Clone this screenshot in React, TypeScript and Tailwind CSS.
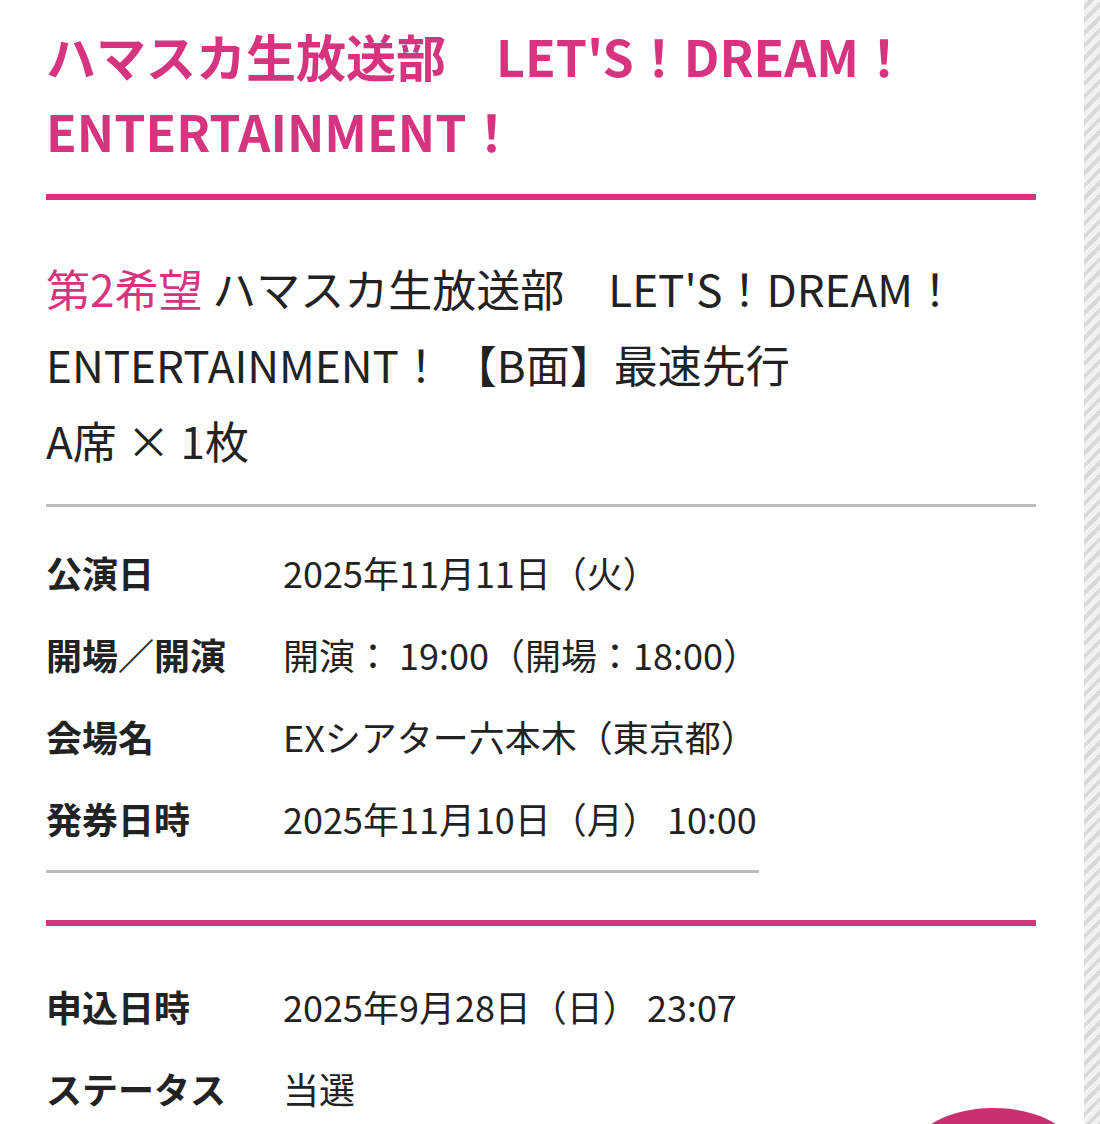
const rows1 = [
  { label: '公演日', value: '2025年11月11日（火）' },
  { label: '開場／開演', value: '開演： 19:00（開場：18:00）' },
  { label: '会場名', value: 'EXシアター六本木（東京都）' },
  { label: '発券日時', value: '2025年11月10日（月） 10:00' },
];

const rows2 = [
  { label: '申込日時', value: '2025年9月28日（日） 23:07' },
  { label: 'ステータス', value: '当選' },
];

function InfoTable({ rows }: { rows: { label: string; value: string }[] }) {
  return (
    <div className="grid grid-cols-[237px_auto] w-fit">
      {rows.map((r) => (
        <div key={r.label} className="contents">
          <div className="py-[15px] text-[36px] leading-[52px] font-semibold">{r.label}</div>
          <div className="py-[15px] text-[36px] leading-[52px] whitespace-nowrap">{r.value}</div>
        </div>
      ))}
    </div>
  );
}

export default function App() {
  return (
    <div
      className="min-h-[1124px] flex bg-[repeating-linear-gradient(135deg,#f2f2f2_0px,#f2f2f2_5px,#d9d9d9_5px,#d9d9d9_9px)] text-[#222]"
      style={{ fontFamily: '"Noto Sans CJK JP", "Noto Sans", sans-serif' }}
    >
      <div className="w-[1084px] bg-white pl-[46px] pr-[48px]">
        <h1 className="pt-[18px] pb-[26px] border-b-[6px] border-[#d6347e] text-[50px] leading-[75px] font-bold text-[#d6347e]">
          ハマスカ生放送部　LET'S！DREAM！ENTERTAINMENT！
        </h1>

        <div className="pt-[50px] pb-[26px] border-b-[3px] border-[#bdbdbd] text-[44px] leading-[76px]">
          <p>
            <span className="text-[#d6347e]">第2希望</span> ハマスカ生放送部　LET'S！DREAM！ENTERTAINMENT！ 【B面】最速先行
          </p>
          <p>A席 × 1枚</p>
        </div>

        <div className="w-fit mt-[24px] pb-[11px] border-b-[3px] border-[#bdbdbd]">
          <InfoTable rows={rows1} />
        </div>

        <div className="mt-[47px] pt-[39px] border-t-[6px] border-[#d6347e]">
          <InfoTable rows={rows2} />
        </div>
      </div>

      <div className="fixed left-[912px] top-[1108px] w-[163px] h-[90px] rounded-[50%] bg-[#c9306f]" />
    </div>
  );
}
